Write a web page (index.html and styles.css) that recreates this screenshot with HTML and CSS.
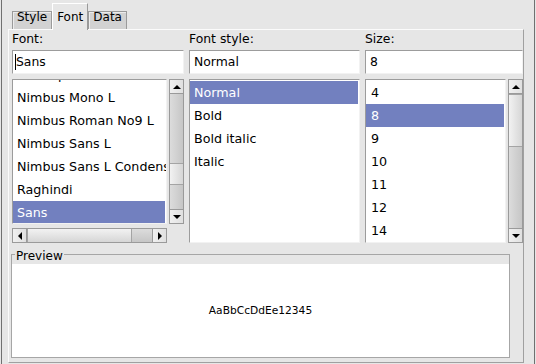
FILE: index.html
```html
<!DOCTYPE html>
<html lang="en">
<head>
  <meta charset="UTF-8">
  <title>Font settings</title>
  <link rel="stylesheet" href="styles.css">
</head>
<body>
  <div class="window">
    <div class="tabs">
      <div class="tab">Style</div>
      <div class="tab active">Font</div>
      <div class="tab">Data</div>
    </div>

    <div class="pane">
      <div class="chooser">
        <label>Font:</label>
        <label>Font style:</label>
        <label>Size:</label>

        <div class="field first"><span class="caret"></span>Sans</div>
        <div class="field">Normal</div>
        <div class="field">8</div>

        <!-- font family list with both scrollbars -->
        <div class="font-col">
          <div class="list">
            <div class="items scrolled">
              <div class="item">Monospace</div>
              <div class="item">Nimbus Mono L</div>
              <div class="item">Nimbus Roman No9 L</div>
              <div class="item">Nimbus Sans L</div>
              <div class="item">Nimbus Sans L Condensed</div>
              <div class="item">Raghindi</div>
              <div class="item sel">Sans</div>
            </div>
          </div>
          <div class="vbar">
            <div class="sbtn up"></div>
            <div class="thumb font-thumb"></div>
            <div class="sbtn down"></div>
          </div>
          <div class="hbar">
            <div class="sbtn left"></div>
            <div class="thumb h-thumb"></div>
            <div class="sbtn right"></div>
          </div>
        </div>

        <div class="list style-list">
          <div class="item sel">Normal</div>
          <div class="item">Bold</div>
          <div class="item">Bold italic</div>
          <div class="item">Italic</div>
        </div>

        <div class="size-col">
          <div class="list">
            <div class="item size">4</div>
            <div class="item size sel">8</div>
            <div class="item size">9</div>
            <div class="item size">10</div>
            <div class="item size">11</div>
            <div class="item size">12</div>
            <div class="item size">14</div>
          </div>
          <div class="vbar">
            <div class="sbtn up"></div>
            <div class="thumb size-thumb"></div>
            <div class="sbtn down"></div>
          </div>
        </div>
      </div>

      <fieldset class="preview">
        <legend>Preview</legend>
        <div class="sample">AaBbCcDdEe12345</div>
      </fieldset>
    </div>
  </div>
</body>
</html>
```

FILE: styles.css
```css
body { margin: 0; background: #e6e6e6; font-family: "DejaVu Sans", "Noto Sans", sans-serif; font-size: 12.4px; color: #000; overflow: hidden; }
.window { box-sizing: border-box; width: 534px; height: 364px; margin-left: 1px; padding: 3px 10px 0 6px; border-left: 1px solid #707070; border-right: 1px solid #707070; }

/* tabs */
.tabs { display: flex; align-items: flex-end; height: 26px; padding-left: 4px; font-size: 12px; }
.tab { box-sizing: border-box; height: 18px; padding: 0 4px; line-height: 10px; background: #d2d2d2; border: 1px solid #9a9a9a; border-bottom: 0; box-shadow: inset 1px 1px 0 #ececec; }
.tab.active { position: relative; z-index: 1; height: 27px; margin-bottom: -1px; padding-top: 8px; background: #e6e6e6; border-color: #fff #9a9a9a #e6e6e6 #fff; box-shadow: none; }

.pane { box-sizing: border-box; height: 334px; padding: 0 0 0 3px; border: 1px solid; border-color: #fbfbfb #a0a0a0 #a0a0a0 #fbfbfb; }

/* chooser grid */
.chooser { display: grid; grid-template-columns: 172px 171px 158px; grid-template-rows: 20px 24px 164px; column-gap: 5px; }
.chooser label { line-height: 16px; padding-top: 1px; }
.field { box-sizing: border-box; height: 24px; padding-left: 4px; line-height: 22px; background: #fff; border: 1px solid; border-color: #9c9c9c #f2f2f2 #f2f2f2 #9c9c9c; }
.field.first { padding-left: 2px; }
.caret { display: inline-block; width: 1px; height: 16px; vertical-align: -4px; background: #000; }

.font-col, .style-list, .size-col { margin-top: 5px; }
.list { box-sizing: border-box; padding: 1px 1px 0 0; overflow: hidden; background: #fff; border: 1px solid; border-color: #9c9c9c #f2f2f2 #f2f2f2 #9c9c9c; }
.item { height: 23px; line-height: 23px; padding-left: 4px; font-size: 12.7px; white-space: nowrap; }
.item.size { padding-left: 5px; }
.item.sel { background: #7280bf; color: #fff; }
.items.scrolled { margin-top: -18px; }

.font-col { display: grid; grid-template-columns: 155px 15px; grid-template-rows: 145px 15px; column-gap: 2px; row-gap: 4px; }
.size-col { display: grid; grid-template-columns: 141px 15px; column-gap: 2px; }
.size-col .list { height: 164px; }
.style-list { height: 164px; }

/* scrollbars */
.vbar, .hbar { box-sizing: border-box; display: flex; border: 1px solid #9a9a9a; }
.vbar { flex-direction: column; background: linear-gradient(to right, #dcdcdc, #c6c6c6); }
.hbar { background: linear-gradient(to bottom, #dcdcdc, #c6c6c6); }
.sbtn { flex: none; display: flex; align-items: center; justify-content: center; background: linear-gradient(to right, #f0f0f0, #e0e0e0); }
.vbar .sbtn { height: 13px; }
.hbar .sbtn { width: 13px; }
.vbar .up { border-bottom: 1px solid #9a9a9a; }
.vbar .down { margin-top: auto; border-top: 1px solid #9a9a9a; }
.hbar .left { border-right: 1px solid #9a9a9a; }
.hbar .right { margin-left: auto; border-left: 1px solid #9a9a9a; }
.up::after { content: ""; border-left: 4px solid transparent; border-right: 4px solid transparent; border-bottom: 4px solid #000; }
.down::after { content: ""; border-left: 4px solid transparent; border-right: 4px solid transparent; border-top: 4px solid #000; }
.left::after { content: ""; border-top: 4px solid transparent; border-bottom: 4px solid transparent; border-right: 4px solid #000; }
.right::after { content: ""; border-top: 4px solid transparent; border-bottom: 4px solid transparent; border-left: 4px solid #000; }

.thumb { flex: none; box-sizing: border-box; border: 0 solid #a4a4a4; }
.vbar .thumb { border-width: 1px 0; background: linear-gradient(to right, #f2f2f2, #d6d6d6); }
.hbar .thumb { border-width: 0 1px; background: linear-gradient(to bottom, #f2f2f2, #d6d6d6); }
.font-thumb { height: 22px; margin-top: 69px; }
.size-thumb { height: 53px; }
.h-thumb { width: 105px; }

/* preview */
.preview { box-sizing: border-box; width: 499px; min-width: 0; margin: 8px 0 0 -1px; padding: 0; border: 1px solid #a6a6a6; }
.preview legend { margin-left: 3px; padding: 4px 1px 0; font-size: 12px; line-height: 12px; }
.sample { display: flex; align-items: center; justify-content: center; height: 93px; margin-top: 2px; background: #fff; font-size: 10.67px; }
```
